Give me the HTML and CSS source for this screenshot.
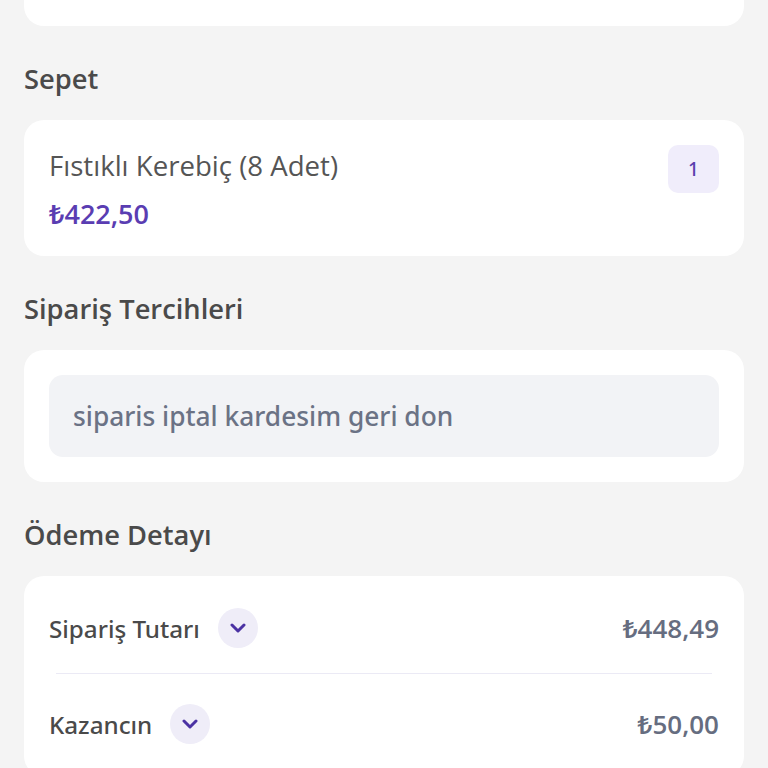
FILE: index.html
```html
<!DOCTYPE html>
<html lang="tr">
<head>
    <meta charset="utf-8">
    <title>Sipariş Detayı</title>
    <link rel="stylesheet" href="styles.css">
</head>
<body>
    <div class="page">
        <div class="card card-top"></div>

        <h2 class="section-title">Sepet</h2>
        <div class="card cart-card">
            <div class="cart-info">
                <div class="cart-name">Fıstıklı Kerebiç (8 Adet)</div>
                <div class="cart-price">₺422,50</div>
            </div>
            <div class="qty-badge">1</div>
        </div>

        <h2 class="section-title">Sipariş Tercihleri</h2>
        <div class="card note-card">
            <div class="note-box">siparis iptal kardesim geri don</div>
        </div>

        <h2 class="section-title">Ödeme Detayı</h2>
        <div class="card pay-card">
            <div class="pay-row">
                <div class="pay-label">
                    <span>Sipariş Tutarı</span>
                    <button class="chevron-btn" type="button">
                        <svg width="16" height="10" viewBox="0 0 16 10"><path d="M2 2 L8 8 L14 2" fill="none" stroke="#4b32a3" stroke-width="3" stroke-linecap="round" stroke-linejoin="round"/></svg>
                    </button>
                </div>
                <div class="pay-value">₺448,49</div>
            </div>
            <div class="divider"></div>
            <div class="pay-row">
                <div class="pay-label">
                    <span>Kazancın</span>
                    <button class="chevron-btn" type="button">
                        <svg width="16" height="10" viewBox="0 0 16 10"><path d="M2 2 L8 8 L14 2" fill="none" stroke="#4b32a3" stroke-width="3" stroke-linecap="round" stroke-linejoin="round"/></svg>
                    </button>
                </div>
                <div class="pay-value">₺50,00</div>
            </div>
        </div>
    </div>
</body>
</html>
```

FILE: styles.css
```css
body {
    background-color: #f4f4f4;
    font-family: "Open Sans", "Noto Sans", Arial, sans-serif;
    margin: 0;
    color: #4a4a4a;
}

.page {
    padding: 0 24px;
}

.card {
    background-color: #ffffff;
    border-radius: 20px;
}

.card-top {
    height: 26px;
    border-radius: 0 0 20px 20px;
}

.section-title {
    margin: 0;
    padding: 37px 0 25px;
    font-size: 27.3px;
    line-height: 32px;
    font-weight: 600;
    color: #4a4a4a;
}

.cart-card {
    display: flex;
    justify-content: space-between;
    align-items: flex-start;
    padding: 25px;
}

.cart-name {
    margin-top: 3px;
    font-size: 27.6px;
    line-height: 34px;
    color: #555555;
}

.cart-price {
    margin-top: 15px;
    font-size: 27px;
    line-height: 34px;
    font-weight: 600;
    color: #5a3db2;
}

.qty-badge {
    width: 51px;
    height: 48px;
    border-radius: 10px;
    background-color: #f0edfb;
    color: #5a3fae;
    font-family: "Noto Sans", "Open Sans", sans-serif;
    font-size: 19px;
    font-weight: 500;
    display: flex;
    align-items: center;
    justify-content: center;
}

.note-card {
    padding: 25px;
}

.note-box {
    height: 82px;
    padding: 0 24px;
    border-radius: 14px;
    background-color: #f2f3f6;
    color: #6b7285;
    font-family: "Noto Sans", "Open Sans", sans-serif;
    font-size: 26.3px;
    font-weight: 500;
    display: flex;
    align-items: center;
}

.pay-card {
    padding: 0 25px;
    height: 200px;
}

.pay-row {
    display: flex;
    justify-content: space-between;
    align-items: center;
    padding: 32px 0 25px;
}

.pay-row:last-child {
    padding-top: 30px;
}

.pay-label {
    display: flex;
    align-items: center;
    gap: 18px;
    font-family: "Noto Sans", "Open Sans", sans-serif;
    font-size: 24.2px;
    font-weight: 500;
    color: #4a4a4a;
}

.chevron-btn {
    width: 40px;
    height: 40px;
    border: none;
    border-radius: 50%;
    background-color: #efedf8;
    padding: 0;
    display: flex;
    align-items: center;
    justify-content: center;
}

.pay-value {
    font-size: 26px;
    font-weight: 600;
    color: #666d80;
}

.divider {
    height: 1px;
    margin: 0 7px;
    background-color: #ebeaf5;
}
```
